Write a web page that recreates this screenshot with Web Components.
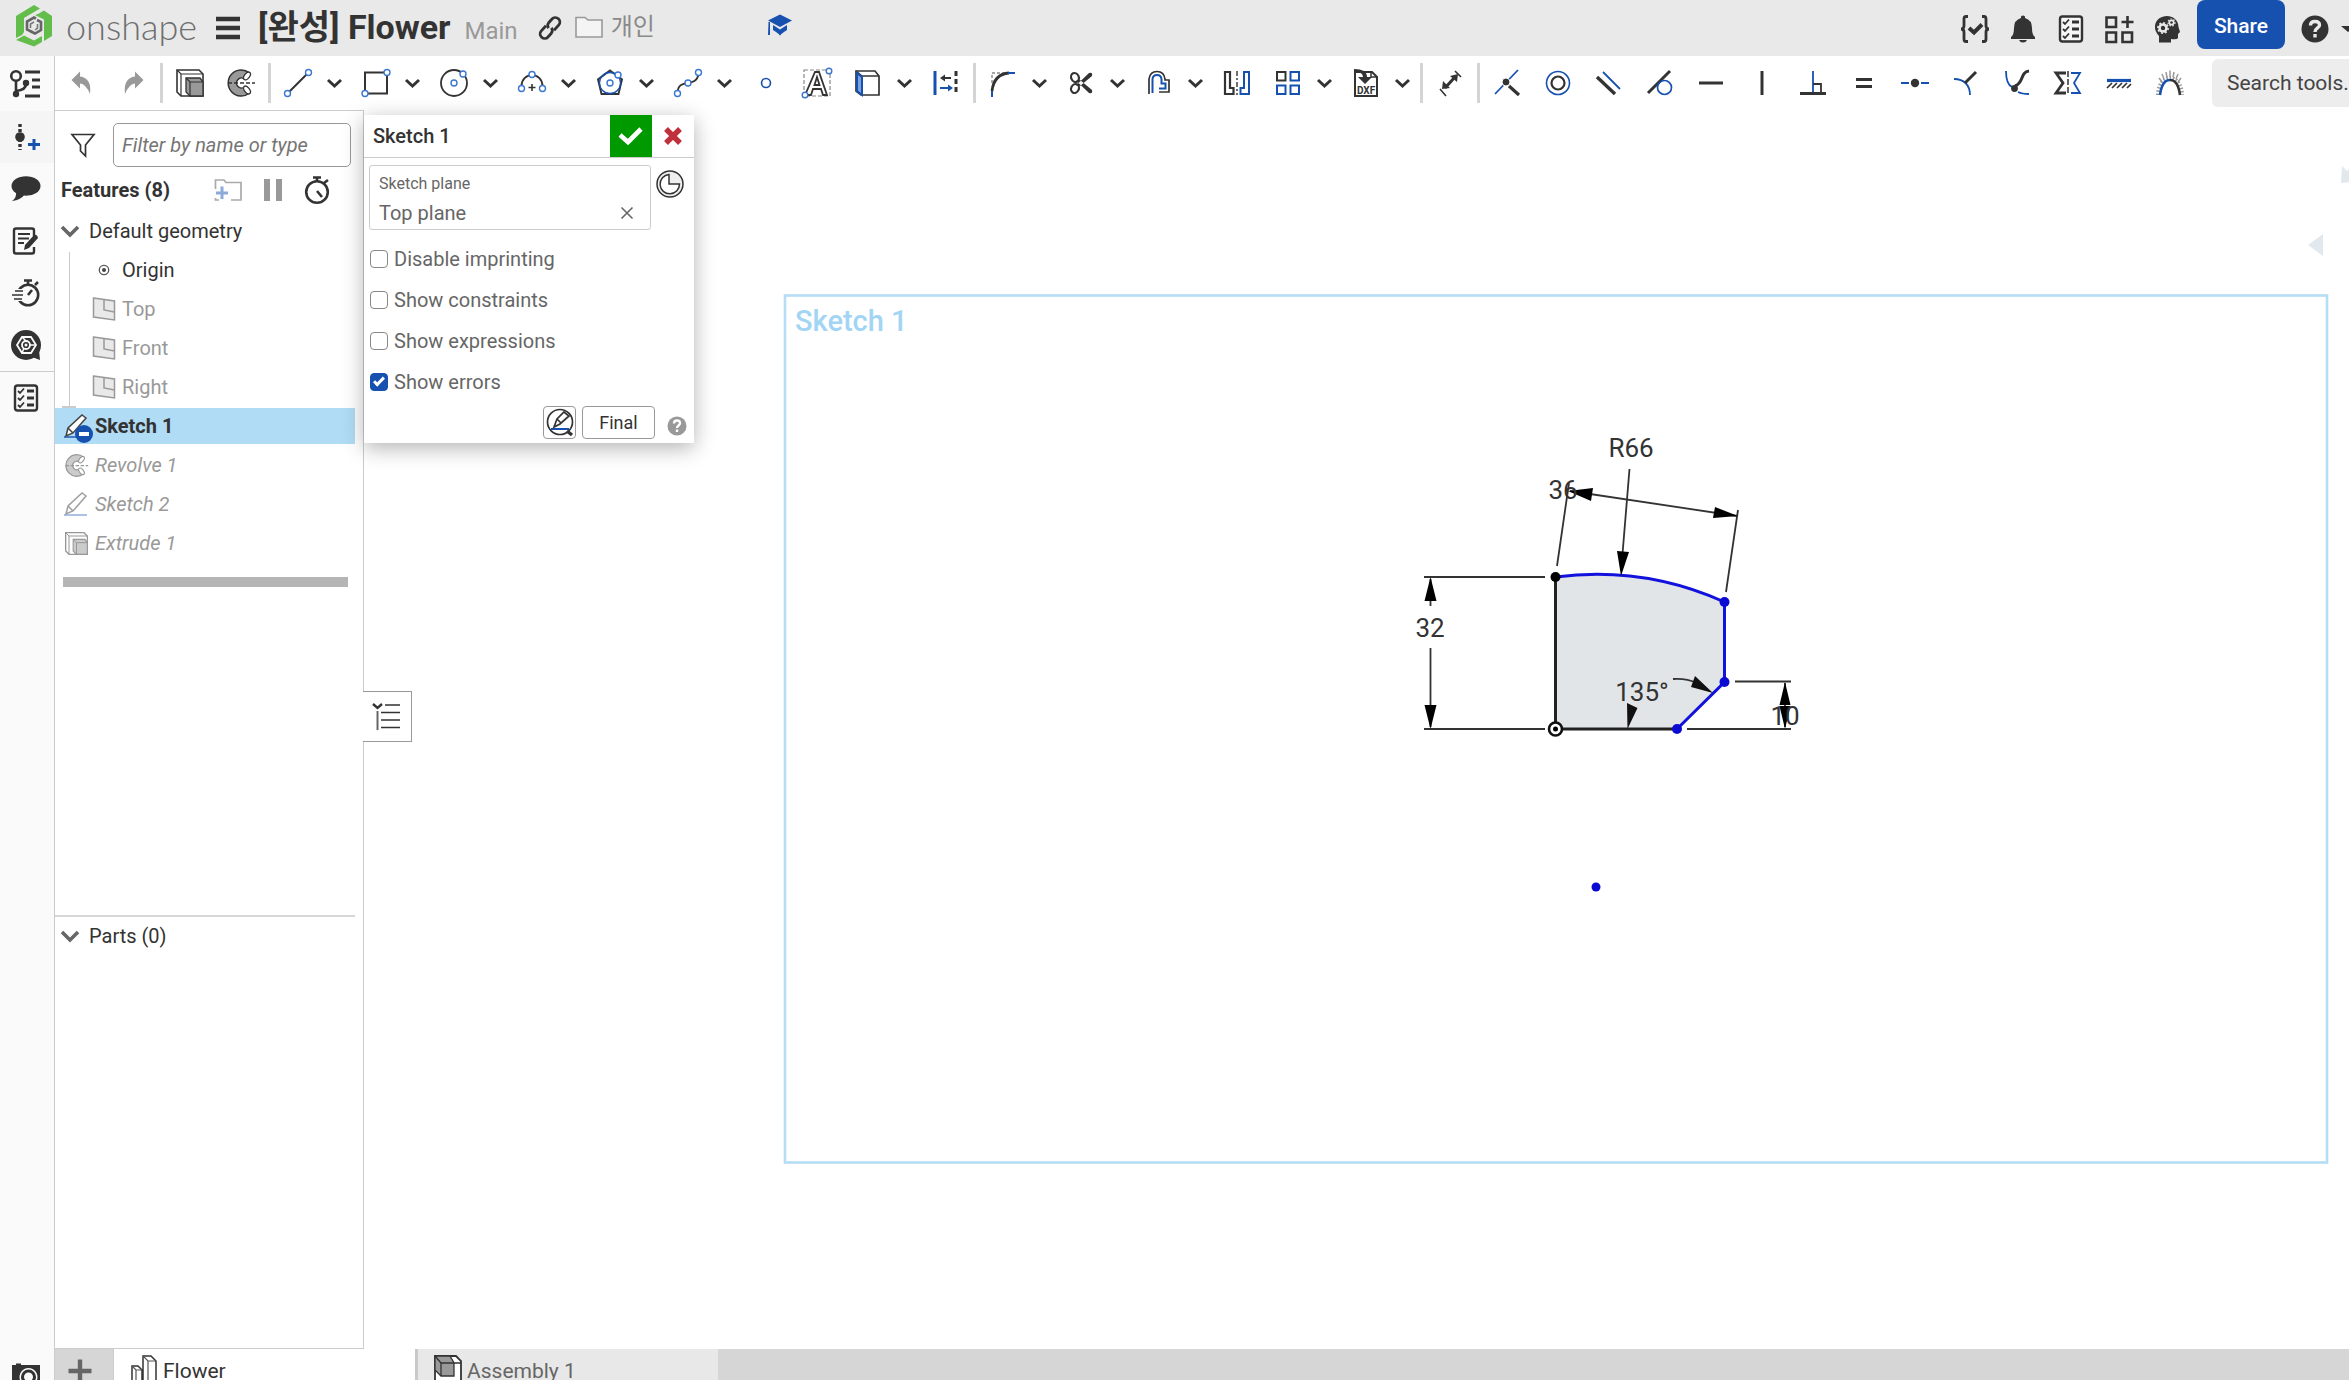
<!DOCTYPE html>
<html lang="en">
<head>
<meta charset="utf-8">
<title>[완성] Flower</title>
<style>
  html, body { margin: 0; height: 100%; }
  body { font-family: Roboto, "Noto Sans CJK KR", sans-serif; font-size: 20px; line-height: 24px; color: #333; background: #fff; overflow: hidden; }
</style>
</head>
<body>
<os-app></os-app>
<script>
/* Every icon is drawn on a grid with its origin in the middle. */
const ICONS = {
  logo: [40, 44, `<g fill="#63bd4b"><path d="M0-21 6-17.500-10-8V6L-12 9-18 12V-10Z"/><path d="M4-12 10-15.500 18-10V10L10 15V-6.500L1-11Z"/><path d="M-18 14-10 9.500 0 14.500 8 10V16L0 20.500Z"/></g><path d="M-2 6-7 3.500V-4.500L0-8.500 2-7.500" fill="none" stroke="#666" stroke-width="2.600"/><path d="M3-6 7-4V4L1 7.500-3 5.500" fill="none" stroke="#666" stroke-width="2.600"/><path d="M-3.500 2V-2L0-4M3.500-2V2L1 4" fill="none" stroke="#777" stroke-width="1.600"/>`],
  burger: [24, 24, `<path d="M-12-9H12M-12 0H12M-12 9H12" stroke="#333" stroke-width="4.600"/>`],
  link: [24, 24, `<g fill="none" stroke="#333" stroke-width="2.800" transform="rotate(-48)"><path d="M-1-4.500H-8A4.500 4.500 0 0 0-8 4.500H-3A4.500 4.500 0 0 0 1 1"/><path d="M1 4.500H8A4.500 4.500 0 0 0 8-4.500H3A4.500 4.500 0 0 0-1-1"/></g>`],
  folder: [28, 24, `<path d="M-13 10V-9.500H-4L-1-7H13V10Z" fill="#f4f4f4" stroke="#999" stroke-width="1.600"/>`],
  cap: [26, 26, `<g fill="#1651b0"><path d="M0-11.500 12-5.500 0 1-12-5.500Z"/><path d="M-7-1 0 3.500 7-1V4L4 6 0 9-4 6-7 4Z"/><path d="M-11.500-4H-10V9H-12Z"/><path d="M-2 5H2L0 10Z"/></g>`],
  verify: [32, 30, `<g fill="none" stroke="#333" stroke-width="2.800"><path d="M-7-12.500H-9Q-11-12.500-11-10V-3Q-11 0-14 0 -11 0-11 3V10Q-11 12.500-9 12.500H-7M7-12.500H9Q11-12.500 11-10V-3Q11 0 14 0 11 0 11 3V10Q11 12.500 9 12.500H7"/><path d="M-6-1-1 3.500 7-4.500" stroke-width="4"/></g>`],
  bell: [28, 30, `<path d="M-2-12.500Q0-14.500 2-12.500V-11Q9-9 9-1 9 6 12 8V10H-12V8Q-9 6-9-1-9-9-2-11Z M-4 11H4Q3 13.500 0 13.500T-4 11Z" fill="#333"/>`],
  list: [28, 30, `<rect x="-11" y="-12.500" width="22" height="25" rx="2.500" fill="#f6f6f6" stroke="#333" stroke-width="2.400"/><path d="M1-7H8M1 0H8M1 7H8" stroke="#333" stroke-width="3"/><path d="M-8-7-6-5-2-9.500M-8 0-6 2-2-2.500M-8 7-6 9-2 4.500" fill="none" stroke="#333" stroke-width="1.800"/>`],
  apps: [30, 30, `<path d="M-12.500-11.500H-3V-2H-12.500ZM-12.500 3.500H-3V13H-12.500ZM3.500 3.500H13V13H3.500ZM8.500-13V-1M2.500-7H14.500" fill="none" stroke="#333" stroke-width="2.600"/>`],
  head: [28, 30, `<path d="M-8 13.500V7Q-12.500 2-12-3C-11-16 11-17 11.500-2L13 3 11 5V9Q10 11 4 10V13.500Z" fill="#333"/><circle cx="-4" cy="-1" r="3.500" fill="none" stroke="#e9e9e9" stroke-width="2.600"/><circle cx="-4" cy="-1" r="5.200" fill="none" stroke="#e9e9e9" stroke-width="1.500" stroke-dasharray="2 2"/><circle cx="4.500" cy="-6.500" r="2.200" fill="none" stroke="#e9e9e9" stroke-width="1.700"/><circle cx="4.500" cy="-6.500" r="3.500" fill="none" stroke="#e9e9e9" stroke-width="1.200" stroke-dasharray="1.500 1.500"/>`],
  help: [28, 28, `<circle r="13.500" fill="#333"/><path d="M-4.500-3.500Q-4.500-7.500 0-7.500T4.500-3.700C4.500-1 0-1 0 3M0 5V8.500" fill="none" stroke="#e9e9e9" stroke-width="3.400"/>`],
  helpsmall: [20, 20, `<circle r="9.500" fill="#999"/><path d="M-3-2.500Q-3-5.500 0-5.500T3-2.700C3-.5 0-.5 0 2M0 3.500V6" fill="none" stroke="#fff" stroke-width="2.400"/>`],
  caret: [14, 8, `<path d="M-7-3H7L0 3Z" fill="#333"/>`],
  chev: [15, 10, `<path d="M-6.500-3 0 3 6.500-3" fill="none" stroke="#333" stroke-width="3"/>`],
  chevgrey: [18, 12, `<path d="M-8-4 0 4 8-4" fill="none" stroke="#666" stroke-width="3.600"/>`],

  tree: [30, 28, `<g fill="none" stroke="#333" stroke-width="2.600"><circle cx="-10" cy="-8" r="4.800"/><path d="M-10-3V9M-10 7Q0 6 0 0"/><path d="M-1-12H14M6-4H14M6 3H14M-1 12H14" stroke-width="3"/></g><circle cx="-10" cy="10" r="3.200" fill="#333"/><circle cx="0" cy="-1" r="3.200" fill="#333"/>`],
  addver: [30, 28, `<path d="M-7-13V13" stroke="#333" stroke-width="3.400" stroke-dasharray="3 2"/><circle cx="-7" cy="0" r="4.800" fill="#333"/><path d="M7 2V13M1 7.500H13" stroke="#1651b0" stroke-width="3"/>`],
  speech: [32, 28, `<ellipse cx="0" cy="-3" rx="14.500" ry="9.800" fill="#333"/><path d="M-10 2Q-9 9-14 12-5 11-1 5Z" fill="#333"/>`],
  note: [28, 28, `<path d="M8-5V-10.500Q8-12.500 6-12.500H-10Q-12-12.500-12-10.500V10.500Q-12 12.500-10 12.500H6Q8 12.500 8 10.500V6" fill="none" stroke="#333" stroke-width="2.400"/><path d="M-8-7H4M-8-2.500H3M-8 2H-2" stroke="#333" stroke-width="2"/><path d="M-2 9-1 4 8-6Q11-7 12-3L3 7Z" fill="#333"/>`],
  fast: [30, 28, `<g fill="none" stroke="#333"><circle cx="2" cy="2" r="10.200" stroke-width="2.600"/><path d="M-2-12.500H6M2-12V-8M9-8 12-11M2 2 6-3" stroke-width="2.600"/></g><path d="M-14-2H-3M-15 2H-1M-14 6H-4" stroke="#fafafa" stroke-width="4"/><path d="M-11-2H-3M-14 2H-3M-12 6H-4" stroke="#333" stroke-width="1.600"/>`],
  assist: [32, 32, `<circle r="15" fill="#333"/><path d="M6 12 14 15 13 5Z" fill="#333"/><path d="M-4-8H5L10 0 5 8H-4L-9 0Z" fill="none" stroke="#fafafa" stroke-width="1.800"/><circle r="4" fill="none" stroke="#fafafa" stroke-width="1.800"/><circle r="1.500" fill="#fafafa"/><path d="M-4-8 0-4M10 0 4 0M-4 8-2 3" stroke="#fafafa" stroke-width="1.500"/>`],
  camera: [28, 26, `<path d="M-14-9H-10V-10.500H-5V-9H14V6H11A9 9 0 1 0-6 6H-14Z" fill="#333"/><circle cx="2.500" cy="3" r="6" fill="none" stroke="#333" stroke-width="3"/>`],

  undo: [22, 26, `<path d="M-10.500-3 -2-11.500V-6.500Q10-5 8 11 4 1-2 .5V5.500Z" fill="#999"/>`],
  redo: [22, 26, `<path d="M10.500-3 2-11.500V-6.500Q-10-5-8 11-4 1 2 .5V5.500Z" fill="#999"/>`],
  extrude: [30, 30, `<path d="M-13-13H9L13-9V13H-9L-13 9Z" fill="#fff" stroke="#333" stroke-width="1.600"/><path d="M-13-13-9-9H13M-9-9V13" fill="none" stroke="#333" stroke-width="1.200"/><path d="M-4-5H10L13-1V13H0L-4 9Z" fill="#999" stroke="#333" stroke-width="1.300"/><path d="M-4-5 0-1H13M0-1V13" fill="none" stroke="#333" stroke-width="1.200"/>`],
  revolve: [30, 30, `<path d="M8.500-10A13 13 0 1 0 8.500 10L3.500 4A5 5 0 1 1 3.500-4Z" fill="#999" stroke="#333" stroke-width="1.500"/><g fill="#fff" stroke="#333" stroke-width="1.300"><ellipse cx="6" cy="-7" rx="2.500" ry="4.500" transform="rotate(38 6 -7)"/><ellipse cx="6" cy="7" rx="2.500" ry="4.500" transform="rotate(-38 6 7)"/></g><path d="M-13 0H14" stroke="#333" stroke-width="1.500" stroke-dasharray="4 2"/>`],
  line: [32, 32, `<path d="M-9 9 10-10" stroke="#333" stroke-width="2"/><g class="p"><circle cx="-10.500" cy="10.500" r="3"/><circle cx="10.500" cy="-10.500" r="3"/></g>`],
  rect: [32, 32, `<path d="M-11-10.500H11V10.500H-11Z" fill="none" stroke="#333" stroke-width="2"/><g class="p"><circle cx="-11" cy="10.500" r="3"/><circle cx="11" cy="-10.500" r="3"/></g>`],
  circle: [32, 32, `<circle r="13" fill="none" stroke="#333" stroke-width="1.800"/><g class="p"><circle r="3"/><circle cx="9" cy="-9" r="3"/></g>`],
  arc: [32, 32, `<path d="M-10.500 3A10.500 11 0 0 1 10.500 3" fill="none" stroke="#333" stroke-width="1.800"/><path d="M0 1V8M-3.500 4.500H3.500" stroke="#333" stroke-width="1.600"/><g class="p"><circle cx="-10.500" cy="5.500" r="3"/><circle cx="10.500" cy="5.500" r="3"/><circle cy="-8.500" r="3"/></g>`],
  polygon: [32, 32, `<path d="M0-12.500 12-3.500 8.500 11H-8.500L-12-3.500Z" fill="none" stroke="#333" stroke-width="1.900"/><circle r="10.500" fill="none" stroke="#1651b0" stroke-width="1.300"/><g class="p"><circle r="3"/><circle cx="8" cy="-8" r="3"/></g>`],
  spline: [32, 32, `<path d="M-10.500 9C-9-6 8 6 10.500-9" fill="none" stroke="#333" stroke-width="1.800"/><g class="p"><circle cx="-10.500" cy="10.500" r="3"/><circle r="3"/><circle cx="10.500" cy="-10.500" r="3"/></g>`],
  point: [32, 32, `<circle r="4.500" fill="#fff" stroke="#1651b0" stroke-width="1.600"/>`],
  text: [32, 32, `<path d="M-13-13H13V13H-13Z" fill="none" stroke="#888" stroke-width="1.200" stroke-dasharray="4 2"/><path d="M-9 12H-6L-4 6H4L6 12H10L2-11H-2L-11 10ZM-2.500 2 0-6 2.500 2Z" fill="#fff" stroke="#333" stroke-width="1.800"/><g class="p"><circle cx="-12" cy="12" r="2.800"/><circle cx="12" cy="-12" r="2.800"/></g>`],
  use: [32, 32, `<path d="M-12-12H7L11-7V12H-7L-12 8Z" fill="#fff" stroke="#333" stroke-width="1.700"/><path d="M-12-12-6-7H11M-6-7V12" fill="none" stroke="#333" stroke-width="1.500"/><path d="M-11-10-6-6V12L-11 8Z" fill="#7da3dc" stroke="#1651b0" stroke-width="2"/>`],
  mdim: [32, 32, `<path d="M-11-12V12" stroke="#1651b0" stroke-width="3"/><path d="M10-12V12" stroke="#333" stroke-width="3" stroke-dasharray="5 3"/><path d="M5-5H-3" stroke="#333" stroke-width="2"/><path d="M-6-5-1-8.500V-1.500Z" fill="#333"/><path d="M-6 5H3" stroke="#1651b0" stroke-width="2"/><path d="M7 5 2 1.500V8.500Z" fill="#1651b0"/>`],
  fillet: [32, 32, `<path d="M-11 0V-10H2" fill="none" stroke="#888" stroke-width="1.400" stroke-dasharray="3 2"/><path d="M-11 8Q-9-9 6-10" fill="none" stroke="#333" stroke-width="2.800"/><path d="M-11 8V14M5-10H12" stroke="#1651b0" stroke-width="2"/>`],
  trim: [32, 32, `<g fill="none" stroke="#333" stroke-width="2.200"><ellipse cx="-6" cy="-5.500" rx="3.800" ry="4.600" transform="rotate(-25 -6 -5.500)"/><ellipse cx="-6" cy="5.500" rx="3.800" ry="4.600" transform="rotate(25 -6 5.500)"/></g><path d="M-5 2.500 8-10Q12-11 11-7L-1 3ZM-5-2.500 8 10Q12 11 11 7L-1-3Z" fill="#333"/>`],
  offset: [32, 32, `<path d="M-10 11V-4Q-9-11.500-2-11.500T6-4V-3H10V9H0" fill="none" stroke="#333" stroke-width="1.700"/><path d="M-6.500 10V-4Q-6-8-2-8T2.500-4V.5H6.500V5.500H0" fill="none" stroke="#1651b0" stroke-width="2"/>`],
  mirror: [32, 32, `<path d="M-12-11H-7V5H-3.500V11H-12Z" fill="none" stroke="#333" stroke-width="2.200"/><path d="M12-11H7V5H3.500V11H12Z" fill="none" stroke="#1651b0" stroke-width="2"/><path d="M0-12V12" stroke="#333" stroke-width="1.400" stroke-dasharray="5 2 2 2"/>`],
  pattern: [32, 32, `<g fill="none" stroke-width="2"><rect x="-11" y="-11" width="8.500" height="8.500" stroke="#333"/><g stroke="#1651b0"><rect x="2.500" y="-11" width="8.500" height="8.500"/><rect x="-11" y="2.500" width="8.500" height="8.500"/><rect x="2.500" y="2.500" width="8.500" height="8.500"/></g></g>`],
  dxf: [32, 32, `<path d="M-11-11H6L11-6V13H-11Z" fill="#fff" stroke="#333" stroke-width="2"/><path d="M5-11V-6H11" fill="none" stroke="#333" stroke-width="1.500"/><path d="M-12-14Q1-14 1-6H6L-1 1-8-6H-3Q-3-11-12-12Z" fill="#333"/><text x="0" y="11" text-anchor="middle" font-family="Roboto" font-weight="700" font-size="10" fill="#333">DXF</text>`],
  dim: [32, 32, `<path d="M-5 5 5-6" stroke="#333" stroke-width="3"/><path d="M-8 6-7-2 0 5ZM8-9 0-7 7-1Z" fill="#333"/><path d="M-10 6-4 13M5-12 11-6" stroke="#333" stroke-width="1.600"/>`],
  coincident: [32, 32, `<path d="M-12 11 11-13" stroke="#1651b0" stroke-width="1.800"/><path d="M2 3 12 12" stroke="#333" stroke-width="3.200"/><circle cx="-1" cy="-1" r="4" fill="#333" stroke="#fff"/>`],
  concentric: [32, 32, `<circle r="11.500" fill="none" stroke="#1651b0" stroke-width="1.600"/><circle r="6.500" fill="none" stroke="#333" stroke-width="2.200"/>`],
  parallel: [32, 32, `<path d="M-12-6 6 11" stroke="#333" stroke-width="3.400"/><path d="M-6-11 11 6" stroke="#1651b0" stroke-width="1.800"/>`],
  tangent: [32, 32, `<path d="M-12 10 10-12" stroke="#333" stroke-width="3"/><circle cx="4.500" cy="4.500" r="7" fill="none" stroke="#1651b0" stroke-width="1.700"/>`],
  horizontal: [32, 32, `<path d="M-12 0H12" stroke="#333" stroke-width="3"/>`],
  vertical: [32, 32, `<path d="M0-12V12" stroke="#333" stroke-width="3"/>`],
  perp: [32, 32, `<path d="M0-12V10" stroke="#1651b0" stroke-width="1.800"/><path d="M0 1H8V9" fill="none" stroke="#333" stroke-width="1.800"/><path d="M-13 10.500H13" stroke="#333" stroke-width="3"/>`],
  equal: [32, 32, `<path d="M-8-3.500H8M-8 3.500H8" stroke="#333" stroke-width="3"/>`],
  midpoint: [32, 32, `<path d="M-14 0H-6M6 0H14" stroke="#1651b0" stroke-width="1.800"/><circle r="4.200" fill="#333"/>`],
  normal: [32, 32, `<path d="M-12-4C-2-4 4 2 4 12" fill="none" stroke="#1651b0" stroke-width="1.800"/><path d="M-1 0 10-11" stroke="#333" stroke-width="3"/>`],
  pierce: [32, 32, `<path d="M-11-12C-11-2-9 2-5 4M1 9Q5 11 12 11" fill="none" stroke="#1651b0" stroke-width="1.800"/><path d="M-2 3C7 0 3-11 12-12" fill="none" stroke="#333" stroke-width="3"/><circle cx="-2.500" cy="5.500" r="3.400" fill="#333"/>`],
  symmetric: [32, 32, `<path d="M-2-10H-12L-5 0-12 10H-2" fill="none" stroke="#333" stroke-width="2.800"/><path d="M3-10H12L6 0 12 10H3" fill="none" stroke="#1651b0" stroke-width="1.800"/><path d="M0-12V12" stroke="#333" stroke-width="1.500" stroke-dasharray="6 2"/>`],
  fix: [32, 32, `<path d="M-12-2.500H12" stroke="#1651b0" stroke-width="3.200"/><path d="M-7 0-12 5M-2 0-7 5M3 0-2 5M8 0 3 5M12 1 8 5" stroke="#333" stroke-width="1.700"/>`],
  curvature: [32, 32, `<path d="M-12 12A12 17 0 0 1 12 12" fill="none" stroke="#999" stroke-width="4"  stroke-dasharray="1.400 1.800"/><path d="M-8-1-11-5M-6-4-8-9M-3-5.500-4-11M0-6V-12.500M3-5.500 4-11M6-4 8-9M8-1 11-5" stroke="#999" stroke-width="1.500"/><path d="M-10 12Q-8-3 0-3" fill="none" stroke="#1651b0" stroke-width="2.600"/><path d="M10 12Q8-3 0-3" fill="none" stroke="#333" stroke-width="2.600"/>`],

  filter: [24, 24, `<path d="M-11-10.500H11L2.500 0V11L-2.500 6V0Z" fill="none" stroke="#333" stroke-width="1.700"/>`],
  addfolder: [28, 24, `<path d="M-12.500-1V-10H-4L-2-7.500H13V10H3M-12.500 8V10H-9" fill="none" stroke="#aaa" stroke-width="1.700"/><path d="M-6-3.500V9M-12 3H0" stroke="#8bacdb" stroke-width="3"/>`],
  pause: [20, 22, `<path d="M-6-11V11M6-11V11" stroke="#999" stroke-width="6"/>`],
  watch: [26, 28, `<g fill="none" stroke="#333" stroke-width="2.600"><circle cy="2" r="10.800"/><path d="M-4-12.500H4M0-12V-8M7-7 11-10M0 1 5 7"/></g>`],
  origin: [12, 12, `<circle r="4.700" fill="none" stroke="#555" stroke-width="1.300"/><circle r="2" fill="#444"/>`],
  plane: [24, 24, `<path d="M-10.500-11 10.500-8V11L-10.500 8Z" fill="#e9e9e9" stroke="#999" stroke-width="1.500"/><path d="M0-9.500V1L10.500 3" fill="none" stroke="#999" stroke-width="1.500"/>`],
  pencil: [24, 24, `<path d="M-12 11H11" stroke="#1651b0" stroke-width="1.400"/><path d="M-10 10-8 2 6-11 10-8-3 7ZM-8 2-3 7" fill="#fff" stroke="#444" stroke-width="1.500"/>`],
  collapse: [30, 28, `<path d="M-14-13-9.500-9-5-13" fill="none" stroke="#333" stroke-width="2.400"/><path d="M-9.500-6V13" stroke="#666" stroke-width="2"/><path d="M-2-12H13M-6-4.500H13M-6 3H13M-6 10.500H13" stroke="#333" stroke-width="1.400"/>`],
  tick: [26, 22, `<path d="M-11-1-3 6 10-7" fill="none" stroke="#fff" stroke-width="4.600"/>`],
  cross: [20, 20, `<path d="M-7-7 7 7M7-7-7 7" stroke="#c0303a" stroke-width="5.400"/>`],
  clear: [14, 14, `<path d="M-5.500-5.500 5.500 5.500M5.500-5.500-5.500 5.500" stroke="#666" stroke-width="1.600"/>`],
  clock: [28, 28, `<circle r="13" fill="#eee" stroke="#333" stroke-width="1.500"/><path d="M-1-9.500V0H9.500A9.700 9.700 0 1 1-1-9.500Z" fill="#fff" stroke="#333" stroke-width="1.500"/>`],
  look: [28, 28, `<circle cx="0" cy="-1" r="12.500" fill="none" stroke="#333" stroke-width="1.700"/><path d="M7 8 12 12" stroke="#333" stroke-width="3.500"/><path d="M-9 6H9" stroke="#1651b0" stroke-width="2"/><path d="M-6 4-3-4 4-11 9-7 0 1Z M-3-4 1 0" fill="#fff" stroke="#333" stroke-width="1.700"/>`],
  plus: [24, 24, `<path d="M0-11.500V11.500M-11.500 0H11.500" stroke="#666" stroke-width="4.400"/>`],
  studio: [28, 34, `<path d="M-12-5H-6L-2-1V14H-8L-12 10ZM-1-15H7L12-10V16H4L-1 11Z" fill="#fff" stroke="#333" stroke-width="1.500"/><path d="M-12-5-8-1H-2M-8-1V14M-1-15 4-10H12M4-10V16" fill="none" stroke="#555" stroke-width="1.200"/>`],
  assembly: [28, 34, `<path d="M-13-15H8L13-10V16H-8L-13 9Z" fill="#fff" stroke="#333" stroke-width="1.800"/><path d="M-13-15H2L6-8V5H-7L-13-1Z" fill="#999" stroke="#333" stroke-width="1.300"/><path d="M-13-15-7-8H13M-7-8V5" fill="none" stroke="#333" stroke-width="1.300"/>`]
};

/* Registers an element whose shadow root is built from a style sheet and a markup function. */
const element = (name, css, markup) => customElements.define(name, class extends HTMLElement {
  constructor() { super(); this.attachShadow({ mode: 'open' }); }
  connectedCallback() {
    this.shadowRoot.innerHTML = `<style>*{box-sizing:border-box}button,input{font:inherit;color:inherit}button{padding:0;border:0;background:none;display:flex;align-items:center;justify-content:center;flex:none}${css}</style>${markup(this)}`;
  }
});

/* "size" sets the drawn width; without it the icon keeps its own. */
element('os-icon', `:host{display:block;flex:none}svg{display:block;overflow:visible}.p circle{fill:#fff;stroke:#3b76cf;stroke-width:1.4px}`, el => {
  const [w, h, body] = ICONS[el.getAttribute('name')];
  const size = +el.getAttribute('size') || w;
  return `<svg width="${size}" height="${size * h / w}" viewBox="${-w / 2} ${-h / 2} ${w} ${h}" aria-hidden="true">${body}</svg>`;
});

const icon = (n, size) => `<os-icon name="${n}"${size ? ` size="${size}"` : ''}></os-icon>`;

element('os-header', `
  :host{display:flex;align-items:center;height:56px;background:#e9e9e9;padding-left:14px;overflow:hidden}
  .home{display:flex;align-items:center;gap:12px;color:#6e6e6e;text-decoration:none;font:300 36px/40px Lato,sans-serif;padding-bottom:5px}
  .menu{margin:0 18px 0 19px}
  h1{margin:0;font-size:34px;line-height:40px;font-weight:700;padding-bottom:3px}
  .main{font-size:24px;color:#999;margin:5px 20px 0 14px}
  .dir{display:flex;align-items:center;gap:8px;color:#8a8a8a;font-size:24px;text-decoration:none;margin-left:13px;padding-bottom:2px}
  .learn{margin-left:112px;padding-bottom:5px}
  nav{margin-left:auto;display:flex;align-items:center;flex:none}
  nav button{width:48px;height:56px;padding-top:2px}
  nav .share{width:88px;height:49px;margin:0 15px 7px 6px;border-radius:8px;background:#1651b0;color:#fff;font-size:21px;font-weight:500}
  nav .help{width:30px;margin-right:11px} nav .more{width:8px;overflow:hidden;justify-content:flex-start}
`, () => `
  <a class="home" href="#">${icon('logo')}<span>onshape</span></a>
  <button class="menu" aria-label="Menu">${icon('burger')}</button>
  <h1>[완성] Flower</h1><span class="main">Main</span>
  <button aria-label="Copy link">${icon('link')}</button>
  <a class="dir" href="#">${icon('folder')}<span>개인</span></a>
  <button class="learn" aria-label="Learning center">${icon('cap')}</button>
  <nav>
    ${['verify', 'bell', 'list', 'apps', 'head'].map(n => `<button aria-label="${n}">${icon(n)}</button>`).join('')}
    <button class="share">Share</button>
    <button class="help" aria-label="Help">${icon('help')}</button>
    <button class="more" aria-label="More help">${icon('caret')}</button>
  </nav>`);

element('os-tool', `:host{display:flex;flex:none}button{width:51px;height:54px}.more{width:27px;justify-content:flex-start;padding-left:4px}`,
  el => `<button aria-label="${el.getAttribute('name')}">${icon(el.getAttribute('name'))}</button>` +
    (el.hasAttribute('menu') ? `<button class="more" aria-label="${el.getAttribute('name')} options">${icon('chev')}</button>` : ''));

const TOOLS = 'undo redo | extrude revolve | line+ rect+ circle+ arc+ polygon+ spline+ point text use+ mdim | fillet+ trim+ offset+ mirror pattern+ dxf+ | dim | coincident concentric parallel tangent horizontal vertical perp equal midpoint normal pierce symmetric fix curvature'.split(' ');

element('os-toolbar', `
  :host{display:flex;align-items:center;height:54px;background:#fff;overflow:hidden;padding-left:1px}
  i{flex:none;width:3px;height:40px;margin:0 1px 0 2px;background:#d4d4d4}
  input{flex:1 0 137px;width:137px;height:48px;margin-left:17px;border:0;border-radius:6px 0 0 6px;background:#ededed;padding:0 0 0 15px;font-size:21px}
  input::placeholder{color:#444;opacity:1}
`, () => TOOLS.map(t => t === '|' ? '<i></i>' : `<os-tool name="${t.replace('+', '')}"${t.endsWith('+') ? ' menu' : ''}></os-tool>`).join('') +
  `<input type="text" aria-label="Search tools" placeholder="Search tools.">`);

element('os-rail', `
  :host{display:flex;flex-direction:column;width:55px;flex:none;background:#fafafa;border-right:1px solid #ccc;overflow:hidden}
  button{height:52px;width:52px} .first{height:55px} .on{background:#f5f5f5;width:54px}
  hr{width:100%;margin:0;border:0;border-top:1px solid #ccc;flex:none} .end{margin-top:auto;height:19px;align-items:flex-start}
`, () => `
  <button class="first" aria-label="Feature list">${icon('tree')}</button>
  ${['addver', 'speech', 'note', 'fast', 'assist'].map((n, i) => `<button${i ? '' : ' class="on"'} aria-label="${n}">${icon(n)}</button>`).join('')}
  <hr><button aria-label="Tasks">${icon('list')}</button>
  <button class="end" aria-label="Snapshot">${icon('camera')}</button>`);

element('os-feature', `
  :host{display:flex;align-items:center;height:36px;margin-bottom:3px;padding-left:9px;color:#333;flex:none}
  .ic{display:flex;width:24px;margin-right:7px;justify-content:center;position:relative}
  :host([child]){padding-left:38px;color:#999} :host([child]) .ic{width:22px}
  :host([strong]){color:#333}
  :host([off]){color:#999;font-style:italic} :host([off]) .ic{opacity:.5}
  :host([selected]){background:#b1dcf5;font-weight:700}
  .badge{position:absolute;right:-5px;bottom:-5px;width:18px;height:18px;border-radius:9px;background:#1651b0;display:flex;align-items:center;justify-content:center}
  .badge::after{content:"";width:10px;height:4px;background:#fff}
`, el => `<span class="ic">${icon(el.getAttribute('icon'), el.getAttribute('size'))}${el.hasAttribute('selected') ? '<span class="badge"></span>' : ''}</span><slot></slot>`);

element('os-features', `
  :host{display:flex;flex-direction:column;width:309px;flex:none;border:1px solid #ccc;border-left:0;background:#fff}
  .filter{display:flex;align-items:center;padding:12px 12px 0 16px;gap:18px}
  .filter input{flex:1;min-width:0;height:44px;border:1px solid #999;border-radius:5px;padding:0 8px;background:#fff}
  input::placeholder{font-style:italic;color:#757575;opacity:1}
  .head{display:flex;align-items:center;height:46px;padding:0 0 0 6px}
  h2{margin:0 44px 0 0;font-size:20px;font-weight:700} .head button+button{margin-left:21px}
  .group{display:flex;align-items:center;height:36px;padding-left:6px;gap:10px;margin-bottom:3px;flex:none}
  .kids{background:linear-gradient(#ccc,#ccc) 14px 0/1px 100% no-repeat,linear-gradient(#ccc,#ccc) 7px 100%/14px 2px no-repeat;flex:none;height:156px}
  .list{margin-right:8px;display:flex;flex-direction:column;flex:0 0 702px}
  .roll{height:10px;margin:13px 7px 0 8px;background:#b5b5b5}
  .parts{border-top:2px solid #d6d6d6;margin-right:8px;padding-top:1px}
`, () => `
  <div class="filter">${icon('filter')}<input type="text" aria-label="Filter" placeholder="Filter by name or type"></div>
  <div class="head"><h2>Features (8)</h2><button aria-label="Add folder">${icon('addfolder')}</button><button aria-label="Suppress">${icon('pause')}</button><button aria-label="Regeneration times">${icon('watch')}</button></div>
  <div class="list">
    <div class="group">${icon('chevgrey')}<span>Default geometry</span></div>
    <div class="kids">
      <os-feature child strong icon="origin">Origin</os-feature>
      <os-feature child icon="plane">Top</os-feature>
      <os-feature child icon="plane">Front</os-feature>
      <os-feature child icon="plane">Right</os-feature>
    </div>
    <os-feature selected icon="pencil">Sketch 1</os-feature>
    <os-feature off icon="revolve" size="25">Revolve 1</os-feature>
    <os-feature off icon="pencil">Sketch 2</os-feature>
    <os-feature off icon="extrude" size="25">Extrude 1</os-feature>
    <div class="roll"></div>
  </div>
  <div class="parts"><div class="group">${icon('chevgrey')}<span>Parts (0)</span></div></div>`);

element('os-check', `
  :host{display:block}label{display:flex;align-items:center;gap:6px;height:41px;color:#666}
  input{appearance:none;width:18px;height:18px;margin:0;border:1px solid #888;border-radius:4px;background:#fff;flex:none}
  input:checked{border-color:#1651b0;background:#1651b0;position:relative}
  input:checked::after{content:"";position:absolute;left:5px;top:1px;width:6px;height:11px;box-sizing:border-box;border:solid #fff;border-width:0 3px 3px 0;rotate:45deg}
`, el => `<label><input type="checkbox"${el.hasAttribute('on') ? ' checked' : ''}><span><slot></slot></span></label>`);

element('os-dialog', `
  :host{display:block;width:330px;background:#fff;box-shadow:0 5px 20px rgba(0,0,0,.3)}
  header{display:flex;height:43px;border-bottom:1px solid #ccc;align-items:flex-start}
  h2{margin:0 auto 0 9px;font-size:20px;line-height:43px;font-weight:500}
  header button{width:42px;height:42px}.ok{background:#090}
  .body{display:flex;padding:7px 10px 0 5px;align-items:flex-start;justify-content:space-between}
  .field{width:282px;height:65px;border:1px solid #ccc;border-radius:3px;padding:6px 16px 0 9px;color:#666}
  .field small{display:block;font-size:16px;line-height:23px}
  .field div{display:flex;justify-content:space-between;align-items:center;line-height:36px}
  .body>button{margin-top:5px}
  .checks{padding:8px 0 0 6px}
  footer{display:flex;justify-content:flex-end;align-items:flex-start;gap:6px;padding:4px 7px 4px 0}
  footer button{height:33px}.b{border:1px solid #999;border-radius:4px;background:#fff;width:33px}.final{width:73px;font-size:18px}.h{width:20px;margin-left:6px;padding-top:7px}
`, () => `
  <header><h2>Sketch 1</h2><button class="ok" aria-label="Accept">${icon('tick')}</button><button aria-label="Cancel">${icon('cross')}</button></header>
  <div class="body"><div class="field"><small>Sketch plane</small><div><span>Top plane</span><button aria-label="Clear">${icon('clear')}</button></div></div><button aria-label="History">${icon('clock')}</button></div>
  <div class="checks"><os-check>Disable imprinting</os-check><os-check>Show constraints</os-check><os-check>Show expressions</os-check><os-check on>Show errors</os-check></div>
  <footer><button class="b" aria-label="View normal to sketch">${icon('look')}</button><button class="b final">Final</button><button class="h" aria-label="Help">${icon('helpsmall')}</button></footer>`);

/* The sketch, in canvas coordinates. */
element('os-canvas', `
  :host{display:block;flex:1;min-width:0;position:relative;background:#fff}
  svg{display:block;position:absolute;width:100%;height:100%}
  text{font-size:26px;fill:#333;text-anchor:middle}.plane{font-size:29px;font-weight:500;fill:#a2d4f4;text-anchor:start}
  .d{fill:none;stroke:#333;stroke-width:1.8}.c{fill:none;stroke:#1212dc;stroke-width:3}.k{stroke:#222;stroke-width:3;fill:none}
  os-dialog{position:absolute;left:0;top:5px}
  .fold{position:absolute;left:-1px;top:581px;width:49px;height:51px;background:#fff;border:1px solid #999;border-left:0}
`, () => `
  <svg viewBox="364 110 1985 1239" preserveAspectRatio="xMidYMid slice" role="img" aria-label="Sketch 1 drawing">
    <path d="M2308 245 2323 234V256Z M2342 166 2347 171 2352 167V182L2341 183Z" fill="#e1e8ee"/>
    <rect x="785" y="295.500" width="1542" height="867" fill="none" stroke="#b5def6" stroke-width="2.600"/>
    <text class="plane" x="795" y="331">Sketch 1</text>
    <path d="M1555.500 577A313.500 313.500 0 0 1 1724.500 602V682L1677 729H1555.500Z" fill="#e1e5e8"/>
    <g class="d">
      <path d="M1424 577H1545M1424 729H1545M1430.500 579V606M1430.500 648V727"/>
      <path d="M1557 566 1569 483M1726 592 1738 510M1570 491 1737 516"/>
      <path d="M1629.500 469 1622 560"/>
      <path d="M1735 681.500H1791M1687 729H1791M1785 683V727"/>
      <path d="M1673 679Q1686 678 1697 683"/>
    </g>
    <path class="k" d="M1555.500 577V729H1677"/>
    <path class="c" d="M1555.500 577A313.500 313.500 0 0 1 1724.500 602V682L1677 729"/>
    <path fill="#000" d="M1430.500 577 1424.500 601H1436.500ZM1430.500 729 1424.500 705H1436.500ZM1568 491 1593 488 1591 501ZM1738 516 1715 507 1713 518ZM1621 576 1617 551 1629 552ZM1785 682 1779.500 705H1790.500ZM1785 729 1779.500 706H1790.500Z"/>
    <path fill="#111" d="M1713 693 1695 676 1691 687ZM1627.500 729 1627 703 1637.500 708Z"/>
    <g fill="#0a0ad2"><circle cx="1724.500" cy="602" r="5"/><circle cx="1724.500" cy="682" r="5"/><circle cx="1677" cy="729" r="5"/><circle cx="1596" cy="887" r="4.500"/></g>
    <circle cx="1555.500" cy="577" r="5"/>
    <circle cx="1555.500" cy="729" r="6.500" fill="#fff" stroke="#111" stroke-width="2.600"/><circle cx="1555.500" cy="729" r="2.500"/>
    <text x="1631" y="457">R66</text><text x="1563" y="499">36</text><text x="1430" y="637">32</text><text x="1642" y="701">135°</text><text x="1785" y="725">10</text>
  </svg>
  <os-dialog></os-dialog>
  <button class="fold" aria-label="Collapse panel">${icon('collapse')}</button>`);

element('os-tabs', `
  :host{display:flex;height:31px;flex:none;overflow:hidden;background:#d6d6d6;align-items:flex-start}
  button{height:44px;font-size:21px}.add{width:59px;padding-right:9px;border-right:1px solid #ccc}
  .tab{width:301px;justify-content:flex-start;padding-left:16px;gap:5px;background:#fff}
  .tab.off{width:303px;background:#e8e8e8;border-left:3px solid #c9c9c9;color:#666}
`, () => `
  <button class="add" aria-label="Add tab">${icon('plus')}</button>
  <button class="tab">${icon('studio')}<span>Flower</span></button>
  <button class="tab off">${icon('assembly')}<span>Assembly 1</span></button>`);

element('os-app', `
  :host{display:flex;flex-direction:column;height:100vh;overflow:hidden}
  .row{display:flex;flex:1;min-height:0;min-width:0}.col{display:flex;flex-direction:column;flex:1;min-width:0}
`, () => `
  <os-header></os-header>
  <div class="row"><os-rail></os-rail>
    <div class="col"><os-toolbar></os-toolbar>
      <div class="row"><os-features></os-features><os-canvas></os-canvas></div>
      <os-tabs></os-tabs></div></div>`);
</script>
</body>
</html>
